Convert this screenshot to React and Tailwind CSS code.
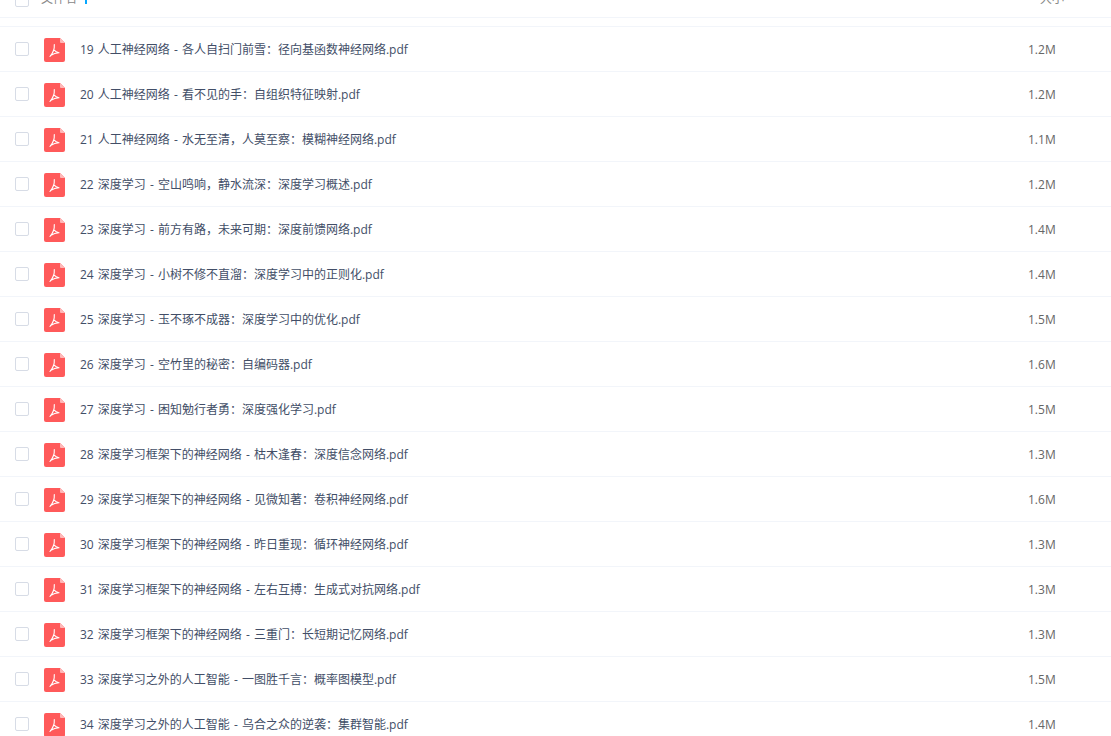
const files = [
  ['19 人工神经网络 - 各人自扫门前雪：径向基函数神经网络.pdf', '1.2M'],
  ['20 人工神经网络 - 看不见的手：自组织特征映射.pdf', '1.2M'],
  ['21 人工神经网络 - 水无至清，人莫至察：模糊神经网络.pdf', '1.1M'],
  ['22 深度学习 - 空山鸣响，静水流深：深度学习概述.pdf', '1.2M'],
  ['23 深度学习 - 前方有路，未来可期：深度前馈网络.pdf', '1.4M'],
  ['24 深度学习 - 小树不修不直溜：深度学习中的正则化.pdf', '1.4M'],
  ['25 深度学习 - 玉不琢不成器：深度学习中的优化.pdf', '1.5M'],
  ['26 深度学习 - 空竹里的秘密：自编码器.pdf', '1.6M'],
  ['27 深度学习 - 困知勉行者勇：深度强化学习.pdf', '1.5M'],
  ['28 深度学习框架下的神经网络 - 枯木逢春：深度信念网络.pdf', '1.3M'],
  ['29 深度学习框架下的神经网络 - 见微知著：卷积神经网络.pdf', '1.6M'],
  ['30 深度学习框架下的神经网络 - 昨日重现：循环神经网络.pdf', '1.3M'],
  ['31 深度学习框架下的神经网络 - 左右互搏：生成式对抗网络.pdf', '1.3M'],
  ['32 深度学习框架下的神经网络 - 三重门：长短期记忆网络.pdf', '1.3M'],
  ['33 深度学习之外的人工智能 - 一图胜千言：概率图模型.pdf', '1.5M'],
  ['34 深度学习之外的人工智能 - 乌合之众的逆袭：集群智能.pdf', '1.4M'],
]

const PdfIcon = () => (
  <svg width="21" height="24" viewBox="0 0 21 24" className="shrink-0 mt-[2px]">
    <path d="M2 0H16L21 5V22a2 2 0 0 1-2 2H2a2 2 0 0 1-2-2V2a2 2 0 0 1 2-2z" fill="#ff5a5a" />
    <path d="M16 0L21 5H17a1 1 0 0 1-1-1z" fill="#ffb9b9" />
    <path d="M10.300 6.500c.3 4-1.300 8.500-4.300 12M10.200 12c1 1.500 2.800 2.400 4.800 2.800M6.500 17.500c2.500-1.700 5-2.800 8.500-2.800" fill="none" stroke="#fff" strokeWidth="1.100" strokeLinecap="round" />
  </svg>
)

const Checkbox = () => (
  <span className="block w-[14px] h-[14px] border border-[#d7dce6] rounded-[2px] bg-white shrink-0" />
)

const FileRow = ({ name, size }) => (
  <div className="flex items-center h-[45px] border-b border-[#f2f5fa]">
    <div className="ml-[15px] w-[29px]">
      <Checkbox />
    </div>
    <PdfIcon />
    <span className="ml-[15px] w-[948px] truncate pt-[2px] text-[12px] [word-spacing:1px] text-[#424e67]">{name}</span>
    <span className="pt-[2px] text-[12px] text-[#666]">{size}</span>
  </div>
)

const App = () => (
  <div className="h-[736px] overflow-hidden bg-white font-['Open_Sans','Noto_Sans_CJK_SC',sans-serif]">
    <div className="relative h-[18px] overflow-hidden border-b border-[#f2f5fa]">
      <div className="flex items-end h-[7px] pl-[15px]">
        <Checkbox />
        <span className="ml-[12px] text-[12px] leading-[16px] text-[#888]">文件名</span>
        <span className="ml-[8px] mb-[3px] w-[2px] h-[4px] bg-[#06a7ff]" />
        <span className="ml-auto mr-[47px] text-[12px] leading-[16px] text-[#888]">大小</span>
      </div>
    </div>
    <div className="mt-[8px] border-t border-[#f2f5fa]">
      {files.map(([name, size]) => (
        <FileRow key={name} name={name} size={size} />
      ))}
    </div>
  </div>
)

export default App
